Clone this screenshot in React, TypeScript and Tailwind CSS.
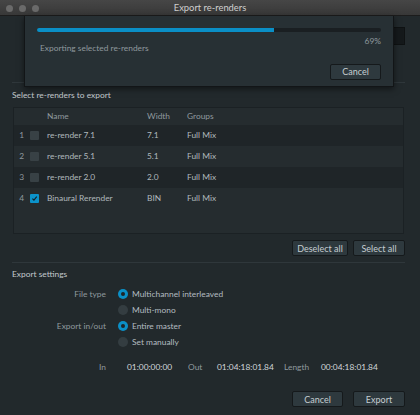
import React from "react";

const rows = [
  { n: 1, name: "re-render 7.1", width: "7.1", group: "Full Mix", checked: false, dark: true },
  { n: 2, name: "re-render 5.1", width: "5.1", group: "Full Mix", checked: false, dark: false },
  { n: 3, name: "re-render 2.0", width: "2.0", group: "Full Mix", checked: false, dark: true },
  { n: 4, name: "Binaural Rerender", width: "BIN", group: "Full Mix", checked: true, dark: false },
];

function Btn({ children, w }: { children: React.ReactNode; w: string }) {
  return (
    <button
      className={`${w} h-[16px] flex items-center justify-center rounded-[2px] border border-[#15191b] bg-[#2e393e] text-[9px] text-[#c5cdd1] leading-none`}
    >
      {children}
    </button>
  );
}

function Radio({ on }: { on: boolean }) {
  return on ? (
    <span className="w-[10px] h-[10px] rounded-full bg-[#0b8fc6] flex items-center justify-center">
      <span className="block w-[4px] h-[4px] rounded-full bg-[#1d2427]" />
    </span>
  ) : (
    <span className="block w-[10px] h-[10px] rounded-full bg-[#343d41]" />
  );
}

function RadioRow({ label, text, on }: { label: string; text: string; on: boolean }) {
  return (
    <div className="flex items-center h-[16px]">
      <span className="w-[94px] text-right text-[#8f999e]">{label}</span>
      <span className="ml-[12px]">
        <Radio on={on} />
      </span>
      <span className="ml-[4px] text-[#b3bcc0]">{text}</span>
    </div>
  );
}

export default function App() {
  return (
    <div
      className="relative w-[420px] h-[415px] overflow-hidden bg-[#22292c] text-[8.4px] leading-none"
      style={{ fontFamily: "Lato, 'Open Sans', sans-serif" }}
    >
      {/* title bar */}
      <div className="relative h-[16px] flex items-center justify-center bg-gradient-to-b from-[#464646] to-[#383838] border-b border-[#1c1c1c]">
        <div className="absolute left-[6px] top-[4.5px] flex gap-[6px]">
          <span className="w-[7px] h-[7px] rounded-full bg-[#6a6a6a]" />
          <span className="w-[7px] h-[7px] rounded-full bg-[#6a6a6a]" />
          <span className="w-[7px] h-[7px] rounded-full bg-[#6a6a6a]" />
        </div>
        <span className="text-[9.4px] text-[#cfcfcf]">Export re-renders</span>
      </div>

      {/* content */}
      <div className="pl-[12px] pr-[15px]">
        <div className="h-[66px] flex justify-end pt-[11px]">
          <div className="w-[120px] h-[18px] bg-[#15191b] border border-[#0f1213]" />
        </div>
        <div className="border-t border-[#2f373b]" />

        <div className="h-[24px] flex items-center text-[#c3c9cc]">Select re-renders to export</div>

        <div className="ml-[1px] mr-[1px] h-[127px] border border-[#1b2124] bg-[#252c2f]">
          <div className="h-[17px] flex items-center text-[#8f999e]">
            <span className="ml-[33px] w-[100px]">Name</span>
            <span className="w-[40px]">Width</span>
            <span>Groups</span>
          </div>
          {rows.map((r) => (
            <div
              key={r.n}
              className={`h-[21px] flex items-center text-[#b0b9bd] ${r.dark ? "bg-[#1f2528]" : ""}`}
            >
              <span className="w-[10px] text-right text-[#8f999e]">{r.n}</span>
              <span className="w-[20px] flex justify-center">
                {r.checked ? (
                  <span className="w-[9px] h-[9px] rounded-[1px] bg-[#0b93cb] flex items-center justify-center">
                    <svg width="7" height="7" viewBox="0 0 10 10">
                      <path d="M2 5.2 L4.2 7.4 L8.2 2.4" fill="none" stroke="#10202a" strokeWidth="1.6" />
                    </svg>
                  </span>
                ) : (
                  <span className="block w-[9px] h-[9px] rounded-[1px] bg-[#384145]" />
                )}
              </span>
              <span className="ml-[3px] w-[100px]">{r.name}</span>
              <span className="w-[40px]">{r.width}</span>
              <span>{r.group}</span>
            </div>
          ))}
        </div>

        <div className="h-[28px] flex items-center justify-end gap-[5px]">
          <Btn w="w-[56px]">Deselect all</Btn>
          <Btn w="w-[52px]">Select all</Btn>
        </div>
        <div className="border-t border-[#2f373b]" />

        <div className="h-[22px] flex items-center text-[#c3c9cc]">Export settings</div>

        <div className="mt-[1px] flex flex-col">
          <RadioRow label="File type" text="Multichannel interleaved" on={true} />
          <RadioRow label="" text="Multi-mono" on={false} />
          <RadioRow label="Export in/out" text="Entire master" on={true} />
          <RadioRow label="" text="Set manually" on={false} />
        </div>

        <div className="mt-[9px] h-[16px] flex items-center">
          <span className="w-[94px] text-right text-[#8f999e]">In</span>
          <span className="ml-[21px] w-[61px] text-[#d3d8db]">01:00:00:00</span>
          <span className="w-[29px] text-[#8f999e]">Out</span>
          <span className="w-[67px] text-[#d3d8db]">01:04:18:01.84</span>
          <span className="w-[37px] text-[#8f999e]">Length</span>
          <span className="text-[#d3d8db]">00:04:18:01.84</span>
        </div>

        <div className="mt-[16px] flex justify-end gap-[10px]">
          <Btn w="w-[51px]">Cancel</Btn>
          <Btn w="w-[52px]">Export</Btn>
        </div>
      </div>

      {/* progress sheet */}
      <div className="absolute left-[24px] top-[16px] w-[370px] h-[71px] bg-[#273034] border-x border-b border-[#121517] shadow-[0_2px_6px_rgba(0,0,0,0.5)] px-[12px] pt-[12px]">
        <div className="h-[4px] rounded-full bg-[#1a1f22] overflow-hidden">
          <div className="h-full bg-[#0a8fc6]" style={{ width: "69%" }} />
        </div>
        <div className="mt-[5px] text-right text-[#8f999e]">69%</div>
        <div className="-mt-[1px] ml-[3px] text-[#8f999e]">Exporting selected re-renders</div>
        <div className="mt-[11px] flex justify-end">
          <Btn w="w-[51px]">Cancel</Btn>
        </div>
      </div>
    </div>
  );
}
